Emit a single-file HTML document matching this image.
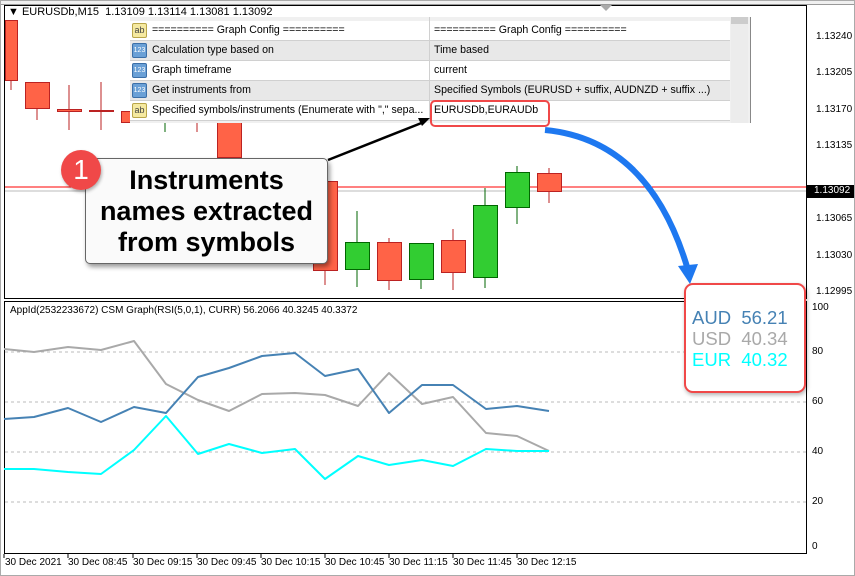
<!DOCTYPE html>
<html><head><meta charset="utf-8"><style>
body{margin:0;width:855px;height:576px;overflow:hidden;background:#fff;font-family:"Liberation Sans",sans-serif;position:relative}
.a{position:absolute}
.tb{font-size:11px;color:#000}
.row{position:absolute;left:130px;width:600px;height:19px;border-bottom:1px solid #d0d0d0;font-size:10.6px;line-height:19px;white-space:nowrap}
.row span{position:absolute;left:22px}
.row b{font-weight:normal;position:absolute;left:304px}
.ic{position:absolute;left:2px;top:2px;width:15px;height:15px;font-size:7px;line-height:15px;text-align:center;border-radius:2px}
.y{background:#f5e9a0;border:1px solid #b9a64a;width:13px;height:13px;font-size:9px;line-height:13px;color:#444}
.n{background:#6aa0d6;border:1px solid #3b6fa8;width:13px;height:13px;color:#fff;font-size:7px;line-height:13px}
.pl{position:absolute;left:816px;font-size:10px}
.tl{position:absolute;top:557px;font-size:10px}
</style></head><body>
<div class="a" style="left:0;top:0;width:855px;height:4px;background:#f0f0f0;border-bottom:1px solid #999"></div>
<svg class="a" style="left:0;top:0" width="855" height="576">
<rect x="4.5" y="5.5" width="802" height="293" fill="none" stroke="#000"/>
<rect x="4.5" y="301.5" width="802" height="252" fill="none" stroke="#000"/>
<rect x="0.5" y="0.5" width="854" height="575" fill="none" stroke="#aaa"/>
<line x1="5" y1="187" x2="806" y2="187" stroke="#f00"/>
<line x1="5" y1="191" x2="806" y2="191" stroke="#bbb"/>
<g stroke="#b22" fill="#ff6347">
<line x1="11" y1="20" x2="11" y2="90"/><rect x="5.5" y="20.5" width="12" height="60"/>
<line x1="37" y1="82" x2="37" y2="120"/><rect x="25.5" y="82.5" width="24" height="26"/>
<line x1="69" y1="85" x2="69" y2="130"/><rect x="57.5" y="109.5" width="24" height="2"/>
<line x1="101" y1="82" x2="101" y2="130"/><rect x="89.5" y="110.5" width="24" height="1"/>
<rect x="121.5" y="111.5" width="14" height="11"/>
<line x1="197" y1="120" x2="197" y2="132"/>
<rect x="217.5" y="120.5" width="24" height="37"/>
<line x1="325" y1="175" x2="325" y2="285"/><rect x="313.5" y="181.5" width="24" height="89"/>
<line x1="389" y1="238" x2="389" y2="290"/><rect x="377.5" y="242.5" width="24" height="38"/>
<line x1="453" y1="229" x2="453" y2="290"/><rect x="441.5" y="240.5" width="24" height="32"/>
<line x1="549" y1="168" x2="549" y2="203"/><rect x="537.5" y="173.5" width="24" height="18"/>
</g>
<g stroke="#060" fill="#32cd32">
<line x1="165" y1="123" x2="165" y2="132"/>
<line x1="357" y1="211" x2="357" y2="287"/><rect x="345.5" y="242.5" width="24" height="27"/>
<line x1="421" y1="243" x2="421" y2="289"/><rect x="409.5" y="243.5" width="24" height="36"/>
<line x1="485" y1="188" x2="485" y2="288"/><rect x="473.5" y="205.5" width="24" height="72"/>
<line x1="517" y1="166" x2="517" y2="224"/><rect x="505.5" y="172.5" width="24" height="35"/>
</g>
<rect x="806" y="185" width="48" height="13" fill="#000"/>
<g stroke="#bbb" stroke-dasharray="3,3">
<line x1="5" y1="352" x2="806" y2="352"/><line x1="5" y1="402" x2="806" y2="402"/><line x1="5" y1="452" x2="806" y2="452"/><line x1="5" y1="502" x2="806" y2="502"/>
</g>
<g fill="none" stroke-width="2" stroke-linejoin="round">
<polyline stroke="#a9a9a9" points="4,349 34,352 68,347 101,350 134,341 166,384 198,400 229,411 262,394 295,393 325,395 358,406 389,373 422,404 453,397 486,433 517,436 549,451"/>
<polyline stroke="#4682b4" points="4,419 34,417 68,408 101,422 134,407 166,413 198,377 229,368 262,356 295,353 325,376 358,369 389,413 422,385 453,385 486,409 517,406 549,411"/>
<polyline stroke="#00ffff" points="4,469 34,469 68,472 101,474 134,450 166,416 198,454 229,444 262,453 295,449 325,479 358,456 389,465 422,460 453,466 486,449 517,451 549,451"/>
</g>
<g stroke="#000">
<line x1="4" y1="554" x2="4" y2="558"/><line x1="68" y1="554" x2="68" y2="558"/><line x1="133" y1="554" x2="133" y2="558"/><line x1="197" y1="554" x2="197" y2="558"/><line x1="261" y1="554" x2="261" y2="558"/><line x1="325" y1="554" x2="325" y2="558"/><line x1="389" y1="554" x2="389" y2="558"/><line x1="453" y1="554" x2="453" y2="558"/><line x1="517" y1="554" x2="517" y2="558"/>
</g>
</svg>
<div class="a tb" style="left:8px;top:6px">&#9660; EURUSDb,M15 &nbsp;1.13109 1.13114 1.13081 1.13092</div>
<div class="a" style="left:600px;top:5px;width:0;height:0;border-left:6px solid transparent;border-right:6px solid transparent;border-top:6px solid #aaa"></div>
<div class="pl" style="top:31px">1.13240</div><div class="pl" style="top:67px">1.13205</div><div class="pl" style="top:104px">1.13170</div><div class="pl" style="top:140px">1.13135</div>
<div class="pl" style="top:185px;color:#fff;left:814px">1.13092</div><div class="pl" style="top:213px">1.13065</div><div class="pl" style="top:250px">1.13030</div><div class="pl" style="top:286px">1.12995</div>
<div class="pl" style="top:302px;left:812px">100</div><div class="pl" style="top:346px;left:812px">80</div><div class="pl" style="top:396px;left:812px">60</div><div class="pl" style="top:446px;left:812px">40</div><div class="pl" style="top:496px;left:812px">20</div><div class="pl" style="top:541px;left:812px">0</div>
<div class="a" style="left:10px;top:305px;font-size:10px">AppId(2532233672) CSM Graph(RSI(5,0,1), CURR) 56.2066 40.3245 40.3372</div>
<div class="tl" style="left:5px">30 Dec 2021</div><div class="tl" style="left:68px">30 Dec 08:45</div><div class="tl" style="left:133px">30 Dec 09:15</div><div class="tl" style="left:197px">30 Dec 09:45</div><div class="tl" style="left:261px">30 Dec 10:15</div><div class="tl" style="left:325px">30 Dec 10:45</div><div class="tl" style="left:389px">30 Dec 11:15</div><div class="tl" style="left:453px">30 Dec 11:45</div><div class="tl" style="left:517px">30 Dec 12:15</div>
<div class="a" style="left:130px;top:17px;width:620px;height:106px;background:#f0f0f0;border-right:1px solid #888"></div>
<div class="a" style="left:731px;top:17px;width:17px;height:106px;background:#ececec"></div>
<div class="a" style="left:731px;top:17px;width:17px;height:7px;background:#ccc"></div>
<div class="row" style="top:21px;background:#fff"><div class="ic y">ab</div><span>========== Graph Config ==========</span><b>========== Graph Config ==========</b></div>
<div class="row" style="top:41px;background:#e8e8e8"><div class="ic n">123</div><span>Calculation type based on</span><b>Time based</b></div>
<div class="row" style="top:61px;background:#fff"><div class="ic n">123</div><span>Graph timeframe</span><b>current</b></div>
<div class="row" style="top:81px;background:#e8e8e8"><div class="ic n">123</div><span>Get instruments from</span><b>Specified Symbols (EURUSD + suffix, AUDNZD + suffix ...)</b></div>
<div class="row" style="top:101px;background:#fff"><div class="ic y">ab</div><span>Specified symbols/instruments (Enumerate with "," sepa...</span><b>EURUSDb,EURAUDb</b></div>
<div class="a" style="left:429px;top:17px;width:1px;height:104px;background:#d0d0d0"></div>
<div class="a" style="left:430px;top:100px;width:116px;height:23px;border:2px solid #f04848;border-radius:5px"></div>
<div class="a" style="left:684px;top:283px;width:118px;height:106px;border:2px solid #f04848;border-radius:9px;box-shadow:1px 2px 4px rgba(0,0,0,.3);background:#fff"></div>
<div class="a" style="left:692px;top:307px;font-size:18.5px;line-height:21px">
<div style="color:#4682b4">AUD&nbsp; 56.21</div><div style="color:#a9a9a9">USD&nbsp; 40.34</div><div style="color:#00ffff">EUR&nbsp; 40.32</div></div>
<svg class="a" style="left:0;top:0" width="855" height="576">
<path d="M545 130 Q650 140 688 270" fill="none" stroke="#1e78f0" stroke-width="6"/>
<polygon points="678,266 698,264 690,284" fill="#1e78f0"/>
<line x1="328" y1="160" x2="424" y2="122" stroke="#000" stroke-width="2.5"/>
<polygon points="430,118 418,118 422,126" fill="#000"/>
</svg>
<div class="a" style="left:85px;top:158px;width:243px;height:106px;background:#fafafa;border:1px solid #666;border-radius:5px;box-shadow:2px 3px 5px rgba(0,0,0,.4);text-align:center;font-weight:bold;font-size:27px;line-height:31px;padding-top:6px;box-sizing:border-box;white-space:nowrap">Instruments<br>names extracted<br>from symbols</div>
<div class="a" style="left:61px;top:150px;width:40px;height:40px;border-radius:50%;background:#f04848;color:#fff;font-size:28px;line-height:40px;text-align:center;box-shadow:1px 2px 3px rgba(0,0,0,.3)">1</div>
</body></html>
